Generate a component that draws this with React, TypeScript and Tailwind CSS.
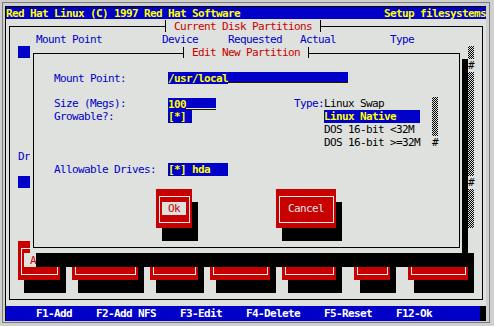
import React from "react";

const CHECK =
  "bg-[image:repeating-conic-gradient(#000_0_25%,#dee1dd_0_50%)] bg-[length:2px_2px]";

export default function App() {
  return (
    <div className="w-[494px] h-[326px] bg-[#cfcfcf] pl-[2px] pt-[2px] font-['DejaVu_Sans_Mono',monospace] text-[11px] tracking-[-0.62px] leading-none">
      <div className="w-[488px] h-[321px] border border-[#7b7b7b] pl-[2px] pt-[3px]">
        <div className="w-[481px] h-[315px] border-l border-t border-black">
          <div className="w-[480px] h-[314px] bg-[#dee1dd] flex flex-col">
            {/* title bar */}
            <div className="h-[12px] bg-[#0000c8] flex justify-between items-center text-[#ffff00] font-bold whitespace-pre">
              <span>Red Hat Linux (C) 1997 Red Hat Software</span>
              <span>Setup filesystems</span>
            </div>

            {/* text-mode body */}
            <div className="h-[287px] grid grid-cols-[repeat(80,6px)] grid-rows-[13px_14px_13px_13px_13px_12px_13px_13px_13px_13px_14px_13px_13px_13px_13px_13px_13px_12px_14px_13px_13px_13px] whitespace-pre">
              {/* Current Disk Partitions window */}
              <div className="col-[1/-1] row-[1/-1] mt-[7px] ml-[3px] mr-[3px] mb-[6px] border border-black" />
              <div className="col-start-27 col-span-27 row-start-1 ml-[3px] mr-[3px] mt-[1px] border-x border-black bg-[#dee1dd] flex items-center justify-center text-[#c80000]">
                Current Disk Partitions
              </div>
              <div className="col-start-6 row-start-2 self-center text-[#0000c8]">Mount Point</div>
              <div className="col-start-27 row-start-2 self-center text-[#0000c8]">Device</div>
              <div className="col-start-38 row-start-2 self-center text-[#0000c8]">Requested</div>
              <div className="col-start-50 row-start-2 self-center text-[#0000c8]">Actual</div>
              <div className="col-start-65 row-start-2 self-center text-[#0000c8]">Type</div>

              <div className="col-start-3 col-span-2 row-start-3 mb-[1px] bg-[#0000c8]" />
              <div className="col-start-3 row-start-11 self-center text-[#0000c8]">Dr</div>
              <div className="col-start-3 col-span-2 row-start-13 mb-[1px] bg-[#0000c8]" />

              {/* list scrollbar */}
              <div className={`col-start-78 row-start-3 row-span-14 ${CHECK}`} />
              <div className="col-start-78 row-start-4 bg-[#dee1dd] flex items-center text-black">#</div>
              <div className="col-start-78 row-start-13 bg-[#dee1dd] flex items-center text-black">#</div>

              {/* button row shadows */}
              <div className="col-start-4 col-span-7 row-start-19 row-span-3 bg-black" />
              <div className="col-start-13 col-span-11 row-start-19 row-span-3 bg-black" />
              <div className="col-start-26 col-span-8 row-start-19 row-span-3 bg-black" />
              <div className="col-start-36 col-span-10 row-start-19 row-span-3 bg-black" />
              <div className="col-start-48 col-span-9 row-start-19 row-span-3 bg-black" />
              <div className="col-start-60 col-span-6 row-start-19 row-span-3 bg-black" />
              <div className="col-start-69 col-span-10 row-start-19 row-span-3 bg-black" />

              {/* button row */}
              <div className="col-start-3 col-span-7 row-start-18 row-span-3 bg-[#c80000] flex flex-col">
                <div className="flex-1 mt-[7px] ml-[3px] mr-[2px] mb-[5px] border border-[#ececec]" />
              </div>
              <div className="col-start-4 col-span-5 row-start-19 bg-[#dee1dd] flex items-center text-[#c80000]"> Add </div>
              <div className="col-start-12 col-span-11 row-start-18 row-span-3 bg-[#c80000] flex flex-col">
                <div className="flex-1 mt-[7px] ml-[3px] mr-[2px] mb-[5px] border border-[#ececec]" />
              </div>
              <div className="col-start-25 col-span-8 row-start-18 row-span-3 bg-[#c80000] flex flex-col">
                <div className="flex-1 mt-[7px] ml-[3px] mr-[2px] mb-[5px] border border-[#ececec]" />
              </div>
              <div className="col-start-35 col-span-10 row-start-18 row-span-3 bg-[#c80000] flex flex-col">
                <div className="flex-1 mt-[7px] ml-[3px] mr-[2px] mb-[5px] border border-[#ececec]" />
              </div>
              <div className="col-start-47 col-span-9 row-start-18 row-span-3 bg-[#c80000] flex flex-col">
                <div className="flex-1 mt-[7px] ml-[3px] mr-[2px] mb-[5px] border border-[#ececec]" />
              </div>
              <div className="col-start-59 col-span-6 row-start-18 row-span-3 bg-[#c80000] flex flex-col">
                <div className="flex-1 mt-[7px] ml-[3px] mr-[2px] mb-[5px] border border-[#ececec]" />
              </div>
              <div className="col-start-68 col-span-10 row-start-18 row-span-3 bg-[#c80000] flex flex-col">
                <div className="flex-1 mt-[7px] ml-[3px] mr-[2px] mb-[5px] border border-[#ececec]" />
              </div>

              {/* Edit New Partition dialog shadow */}
              <div className="col-start-77 row-start-4 row-span-16 bg-black" />
              <div className="col-start-6 col-span-72 row-start-19 bg-black" />

              {/* dialog */}
              <div className="col-start-5 col-span-72 row-start-3 row-span-16 bg-[#dee1dd]" />
              <div className="col-start-5 col-span-72 row-start-3 row-span-16 mt-[7px] ml-[3px] mr-[2px] mb-[5px] border border-black" />
              <div className="col-start-30 col-span-22 row-start-3 ml-[3px] mr-[3px] my-[1px] border-x border-black bg-[#dee1dd] flex items-center justify-center text-[#c80000]">
                Edit New Partition
              </div>

              <div className="col-start-9 row-start-5 self-center text-[#0000c8]">Mount Point:</div>
              <div className="col-start-28 col-span-30 row-start-5 mb-[1px] bg-[#0000c8] flex items-center text-[#ffff00] font-bold">
                <span>/usr/local</span>
                <span className="flex-1 self-stretch border-b border-[#ffff00]" />
              </div>

              <div className="col-start-9 row-start-7 self-center text-[#0000c8]">Size (Megs):</div>
              <div className="col-start-28 col-span-8 row-start-7 mt-[1px] bg-[#0000c8] flex items-center text-[#ffff00] font-bold">
                <span>100</span>
                <span className="flex-1 self-stretch border-b border-[#ffff00] mb-[1px]" />
              </div>

              <div className="col-start-9 row-start-8 self-center text-[#0000c8]">Growable?:</div>
              <div className="col-start-28 col-span-4 row-start-8 bg-[#0000c8] flex items-center text-[#ffff00] font-bold">[*]</div>

              <div className="col-start-49 row-start-7 self-center text-[#0000c8]">Type:</div>
              <div className="col-start-54 row-start-7 self-center text-black">Linux Swap</div>
              <div className="col-start-54 col-span-16 row-start-8 bg-[#0000c8] flex items-center text-[#ffff00] font-bold">Linux Native</div>
              <div className="col-start-54 row-start-9 self-center text-black">DOS 16-bit &lt;32M</div>
              <div className="col-start-54 row-start-10 self-center text-black">DOS 16-bit &gt;=32M</div>
              <div className={`col-start-72 row-start-7 row-span-3 ${CHECK}`} />
              <div className="col-start-72 row-start-10 self-center text-black">#</div>

              <div className="col-start-9 row-start-12 self-center text-[#0000c8]">Allowable Drives:</div>
              <div className="col-start-28 col-span-10 row-start-12 bg-[#0000c8] flex items-center text-[#ffff00] font-bold">[*] hda</div>

              {/* Ok */}
              <div className="col-start-27 col-span-6 row-start-15 row-span-3 bg-black" />
              <div className="col-start-26 col-span-6 row-start-14 row-span-3 bg-[#c80000] flex flex-col">
                <div className="flex-1 mt-[7px] ml-[3px] mr-[2px] mb-[5px] border border-[#ececec]" />
              </div>
              <div className="col-start-27 col-span-4 row-start-15 bg-[#dee1dd] flex items-center text-[#c80000]"> Ok </div>

              {/* Cancel */}
              <div className="col-start-47 col-span-10 row-start-15 row-span-3 bg-black" />
              <div className="col-start-46 col-span-10 row-start-14 row-span-3 bg-[#c80000] flex flex-col">
                <div className="flex-1 mt-[7px] ml-[3px] mr-[2px] mb-[5px] border border-[#ececec]" />
              </div>
              <div className="col-start-48 row-start-15 self-center text-[#e4e4e4]">Cancel</div>
            </div>

            {/* help line */}
            <div className="h-[15px] flex">
              <div className="w-[474px] bg-[#0000c8] grid grid-cols-[repeat(79,6px)] items-center text-white font-bold whitespace-pre">
                <span className="col-start-6 row-start-1">F1-Add</span>
                <span className="col-start-16 row-start-1">F2-Add NFS</span>
                <span className="col-start-30 row-start-1">F3-Edit</span>
                <span className="col-start-41 row-start-1">F4-Delete</span>
                <span className="col-start-54 row-start-1">F5-Reset</span>
                <span className="col-start-66 row-start-1">F12-Ok</span>
              </div>
              <div className="w-[6px] bg-black" />
            </div>
          </div>
        </div>
      </div>
    </div>
  );
}
